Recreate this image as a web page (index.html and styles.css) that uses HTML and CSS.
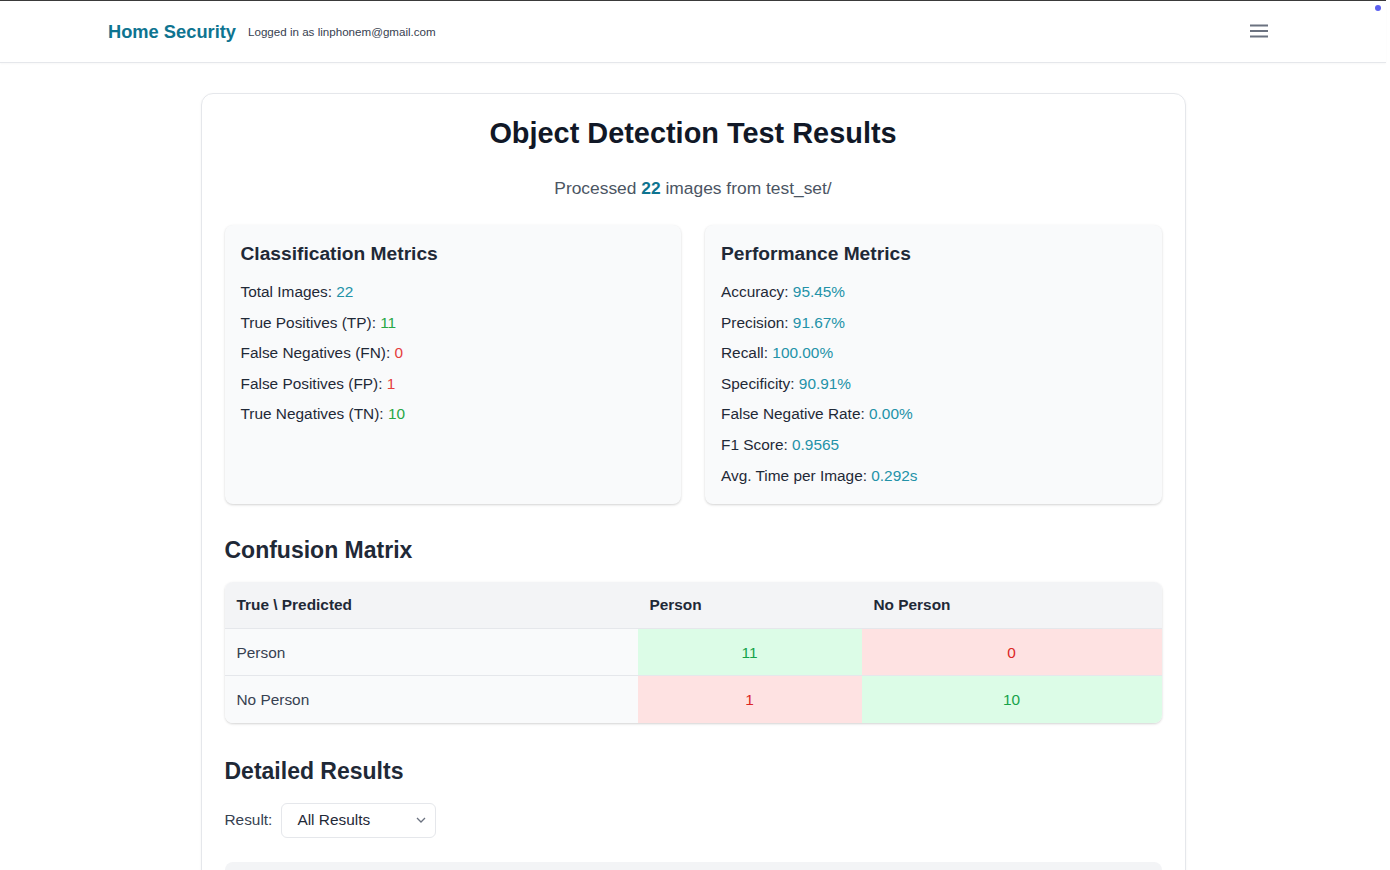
FILE: index.html
```html
<!DOCTYPE html>
<html lang="en">
<head>
<meta charset="utf-8">
<title>Object Detection Test Results</title>
<link rel="stylesheet" href="styles.css">
</head>
<body>
<div class="page">
  <span class="dot"></span>
  <header class="navbar">
    <div class="nav-inner">
      <div class="brand">
        <span class="brand-title">Home Security</span>
        <span class="user">Logged in as linphonem@gmail.com</span>
      </div>
      <button class="menu-btn" aria-label="Menu">
        <svg width="18" height="14" viewBox="0 0 18 14"><path d="M0 1.5h18M0 7h18M0 12.5h18" stroke="#6b7280" stroke-width="2"/></svg>
      </button>
    </div>
  </header>

  <main class="card">
    <h1 class="title">Object Detection Test Results</h1>
    <p class="subtitle">Processed <strong>22</strong> images from test_set/</p>

    <div class="metrics">
      <section class="metric-card">
        <h3>Classification Metrics</h3>
        <p>Total Images: <span class="v-info">22</span></p>
        <p>True Positives (TP): <span class="v-good">11</span></p>
        <p>False Negatives (FN): <span class="v-bad">0</span></p>
        <p>False Positives (FP): <span class="v-bad">1</span></p>
        <p>True Negatives (TN): <span class="v-good">10</span></p>
      </section>
      <section class="metric-card">
        <h3>Performance Metrics</h3>
        <p>Accuracy: <span class="v-info">95.45%</span></p>
        <p>Precision: <span class="v-info">91.67%</span></p>
        <p>Recall: <span class="v-info">100.00%</span></p>
        <p>Specificity: <span class="v-info">90.91%</span></p>
        <p>False Negative Rate: <span class="v-info">0.00%</span></p>
        <p>F1 Score: <span class="v-info">0.9565</span></p>
        <p>Avg. Time per Image: <span class="v-info">0.292s</span></p>
      </section>
    </div>

    <h2 class="section-title">Confusion Matrix</h2>
    <div class="table-wrap">
      <table class="matrix">
        <thead>
          <tr><th class="c1">True \ Predicted</th><th class="c2">Person</th><th class="c3">No Person</th></tr>
        </thead>
        <tbody>
          <tr><td class="rowhead">Person</td><td class="good">11</td><td class="bad">0</td></tr>
          <tr><td class="rowhead">No Person</td><td class="bad">1</td><td class="good">10</td></tr>
        </tbody>
      </table>
    </div>

    <h2 class="section-title second">Detailed Results</h2>
    <div class="filter">
      <label for="res">Result:</label>
      <div class="select" id="res">
        <span>All Results</span>
        <svg width="10" height="6" viewBox="0 0 10 6"><path d="M1 1l4 4 4-4" fill="none" stroke="#6b7280" stroke-width="1.3"/></svg>
      </div>
    </div>
    <div class="results-table"></div>
  </main>
</div>
</body>
</html>
```

FILE: styles.css
```css
* { box-sizing: border-box; }
html, body { margin: 0; padding: 0; background: #fff; }
body {
  font-family: "Liberation Sans", Arial, sans-serif;
  color: #1f2937;
  overflow: hidden;
  height: 870px;
}
.page {
  position: relative;
  margin-right: 4px;
  border-top: 1px solid #3a3a3a;
}
.dot {
  position: absolute;
  top: 4px;
  right: 5px;
  width: 6px;
  height: 6px;
  border-radius: 50%;
  background: #5b5ff0;
}
.navbar {
  height: 62px;
  border-bottom: 1px solid #e5e7eb;
  box-shadow: 0 1px 2px rgba(0,0,0,0.03);
}
.nav-inner {
  max-width: 1200px;
  margin: 0 auto;
  padding: 0 15px;
  height: 100%;
  display: flex;
  align-items: center;
  justify-content: space-between;
}
.brand { display: flex; align-items: center; gap: 12px; }
.brand-title { font-size: 18.3px; font-weight: 700; color: #0e7490; }
.user { font-size: 11.6px; color: #374151; margin-top: -1px; }
.menu-btn {
  border: 0; background: transparent; padding: 8px; margin-right: 2px; margin-top: -2px;
  display: flex; align-items: center; justify-content: center;
}
.card {
  width: 985px;
  margin: 30px auto 0;
  border: 1px solid #e5e7eb;
  border-radius: 12px;
  padding: 23px 23px 60px;
  box-shadow: 0 1px 3px rgba(0,0,0,0.05);
}
.title {
  margin: 0;
  text-align: center;
  font-size: 28.9px;
  line-height: 32px;
  font-weight: 700;
  color: #111827;
}
.subtitle {
  margin: 26px 0 0;
  text-align: center;
  font-size: 17.4px;
  line-height: 27px;
  color: #4b5563;
}
.subtitle strong { color: #0e7490; }
.metrics {
  display: grid;
  grid-template-columns: 1fr 1fr;
  gap: 24px;
  margin-top: 23px;
}
.metric-card {
  background: #f9fafb;
  border-radius: 8px;
  padding: 17px 16px 16px;
  box-shadow: 0 1px 3px rgba(0,0,0,0.12), 0 1px 2px rgba(0,0,0,0.06);
}
.metric-card h3 {
  margin: 0 0 14px;
  font-size: 19.2px;
  line-height: 24px;
  font-weight: 700;
  color: #1f2937;
}
.metric-card p {
  margin: 0 0 6.6px;
  font-size: 15.4px;
  line-height: 24px;
  color: #1f2937;
}
.metric-card p:last-child { margin-bottom: 0; }
.v-info { color: #2392a8; }
.v-good { color: #28a745; }
.v-bad { color: #e53e3e; }
.section-title {
  margin: 32px 0 18px;
  font-size: 23px;
  line-height: 28px;
  font-weight: 700;
  color: #1f2937;
}
.section-title.second { margin-top: 34px; }
.table-wrap {
  border-radius: 8px;
  overflow: hidden;
  box-shadow: 0 1px 3px rgba(0,0,0,0.12), 0 1px 2px rgba(0,0,0,0.06);
}
.matrix {
  width: 100%;
  border-collapse: collapse;
  font-size: 15.4px;
}
.matrix th, .matrix td {
  height: 47px;
  padding: 0 12px;
}
.matrix th {
  background: #f3f4f6;
  text-align: left;
  font-weight: 700;
  color: #1f2937;
  border-bottom: 1px solid #e5e7eb;
  padding-top: 1px;
}
.matrix .c1 { width: 413px; }
.matrix .c2 { width: 224px; }
.matrix td { border-top: 1px solid #e5e7eb; padding-top: 1px; }
.matrix tbody tr:first-child td { border-top: 0; }
.rowhead { background: #f9fafb; color: #374151; }
.good { background: #dcfce7; color: #16a34a; text-align: center; }
.bad { background: #fee2e2; color: #dc2626; text-align: center; }
.filter {
  display: flex;
  align-items: center;
  gap: 9px;
}
.filter label { font-size: 15.4px; color: #374151; }
.select {
  width: 155px;
  height: 35px;
  border: 1px solid #e5e7eb;
  border-radius: 6px;
  padding: 0 9px 0 15px;
  display: flex;
  align-items: center;
  justify-content: space-between;
  font-size: 15.4px;
  color: #1f2937;
}
.results-table {
  margin-top: 24px;
  height: 60px;
  background: #f3f4f6;
  border-radius: 8px 8px 0 0;
}
```
